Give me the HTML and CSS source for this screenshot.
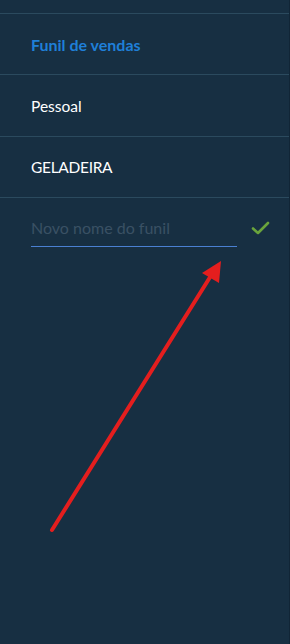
FILE: index.html
```html
<!DOCTYPE html>
<html lang="pt">
<head>
<meta charset="utf-8">
<link rel="stylesheet" href="styles.css">
</head>
<body>
<div class="panel">
  <ul class="list">
    <li class="item active">Funil de vendas</li>
    <li class="item">Pessoal</li>
    <li class="item">GELADEIRA</li>
  </ul>
  <div class="new-row">
    <input class="new-input" type="text" placeholder="Novo nome do funil">
    <svg class="check" width="20" height="16" viewBox="0 0 20 16"><path d="M2 8.5 L7 13 L17 3" fill="none" stroke="#6aa43c" stroke-width="2.6" stroke-linecap="round" stroke-linejoin="round"/></svg>
  </div>
  <svg class="arrow" width="290" height="644" viewBox="0 0 290 644">
    <line x1="52" y1="530" x2="212" y2="274" stroke="#e41e1e" stroke-width="4" stroke-linecap="round"/>
    <polygon points="221,261 202,273 219,283" fill="#e41e1e"/>
  </svg>
</div>
</body>
</html>
```
FILE: styles.css
```css
html, body {
  margin: 0;
  padding: 0;
  background: #172f42;
}
.panel {
  position: relative;
  width: 290px;
  height: 644px;
  padding-top: 13px;
  box-sizing: border-box;
  font-family: Lato, "Open Sans", "Liberation Sans", sans-serif;
  border-right: 1px solid #112536;
}
.list {
  list-style: none;
  margin: 0;
  padding: 0;
}
.item {
  height: 60.4px;
  border-top: 1px solid #2b4a5e;
  display: flex;
  align-items: center;
  padding-left: 31px;
  font-size: 15.5px;
  color: #ffffff;
}
.item:last-child {
  border-bottom: 1px solid #2b4a5e;
  letter-spacing: -0.3px;
}
.item.active {
  color: #1f7fd8;
  font-weight: 700;
  font-size: 16px;
}
.new-row {
  display: flex;
  align-items: center;
  padding: 16px 0 0 31px;
}
.new-input {
  width: 206px;
  box-sizing: border-box;
  background: transparent;
  border: none;
  border-bottom: 1px solid #4a80d2;
  padding: 0 0 5px 0;
  height: 33px;
  font-family: Lato, "Open Sans", "Liberation Sans", sans-serif;
  font-size: 16px;
  color: #ffffff;
  outline: none;
}
.new-input::placeholder {
  color: #3a5164;
}
.check {
  margin-left: 14px;
  margin-top: -6px;
}
.arrow {
  position: absolute;
  left: 0;
  top: 0;
  pointer-events: none;
}
```
